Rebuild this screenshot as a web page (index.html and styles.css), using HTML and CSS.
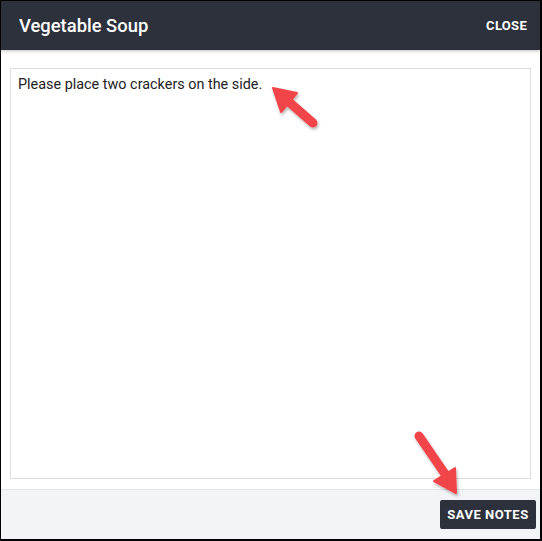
FILE: index.html
```html
<!DOCTYPE html>
<html lang="en">
<head>
    <meta charset="UTF-8">
    <meta name="viewport" content="width=device-width, initial-scale=1.0">
    <title>Vegetable Soup</title>
    <link rel="stylesheet" href="styles.css">
</head>
<body>
    <div class="dialog">
        <div class="dialog-header">
            <div class="dialog-title">Vegetable Soup</div>
            <div class="dialog-close">CLOSE</div>
        </div>
        <div class="dialog-body">
            <div class="notes">Please place two crackers on the side.</div>
        </div>
        <div class="dialog-footer">
            <button class="save-btn">SAVE NOTES</button>
        </div>

        <!-- callout arrows drawn over the screenshot -->
        <svg class="arrows" width="542" height="541" viewBox="0 0 542 541">
            <defs>
                <filter id="shadow" x="-20%" y="-20%" width="140%" height="140%">
                    <feDropShadow dx="1" dy="2" stdDeviation="1.5" flood-color="#000" flood-opacity="0.3"/>
                </filter>
            </defs>
            <g fill="#f2454a" stroke="#f2454a" filter="url(#shadow)">
                <line x1="313" y1="123" x2="289" y2="102" stroke-width="9" stroke-linecap="round"/>
                <polygon points="273,88 297,93 281,112" stroke-width="2" stroke-linejoin="round"/>
                <line x1="419" y1="436" x2="445" y2="474" stroke-width="9" stroke-linecap="round"/>
                <polygon points="456,493 455,468 434,481" stroke-width="2" stroke-linejoin="round"/>
            </g>
        </svg>
    </div>
</body>
</html>
```

FILE: styles.css
```css
:root {
    --dark: #2c313c;
    --border: #dddddd;
    --footer-bg: #f3f4f8;
}

* {
    margin: 0;
    padding: 0;
    box-sizing: border-box;
    font-family: Roboto, 'Liberation Sans', sans-serif;
}

body {
    background: #fff;
}

.dialog {
    position: relative;
    width: 542px;
    height: 541px;
    border-top: 1px solid #000;
    border-left: 1px solid #000;
    border-right: 2px solid #000;
    border-bottom: 2px solid #000;
    display: flex;
    flex-direction: column;
    background: #fff;
}

.dialog-header {
    height: 49px;
    background: var(--dark);
    display: flex;
    justify-content: space-between;
    align-items: center;
    padding: 0 13px 0 18px;
    box-shadow: 0 1px 3px rgba(0, 0, 0, 0.25);
    position: relative;
    z-index: 1;
}

.dialog-title {
    color: #fff;
    font-size: 18.4px;
    font-weight: 500;
}

.dialog-close {
    color: #fff;
    font-size: 13px;
    font-weight: 700;
    letter-spacing: 0.3px;
}

.dialog-body {
    flex: 1;
    padding: 18px 9px 10px 9px;
    display: flex;
}

.notes {
    flex: 1;
    border: 1px solid var(--border);
    padding: 7px 7px;
    font-size: 14.4px;
    color: #222;
}

.dialog-footer {
    height: 50px;
    background: var(--footer-bg);
    border-top: 1px solid #e4e5ea;
    display: flex;
    justify-content: flex-end;
    align-items: center;
    padding: 0 4px 0 0;
}

.save-btn {
    background: var(--dark);
    color: #fff;
    border: none;
    border-radius: 2px;
    height: 29px;
    width: 96px;
    font-size: 13px;
    font-weight: 700;
    letter-spacing: 0.5px;
}

.arrows {
    position: absolute;
    left: -1px;
    top: -1px;
    pointer-events: none;
    z-index: 2;
}
```
